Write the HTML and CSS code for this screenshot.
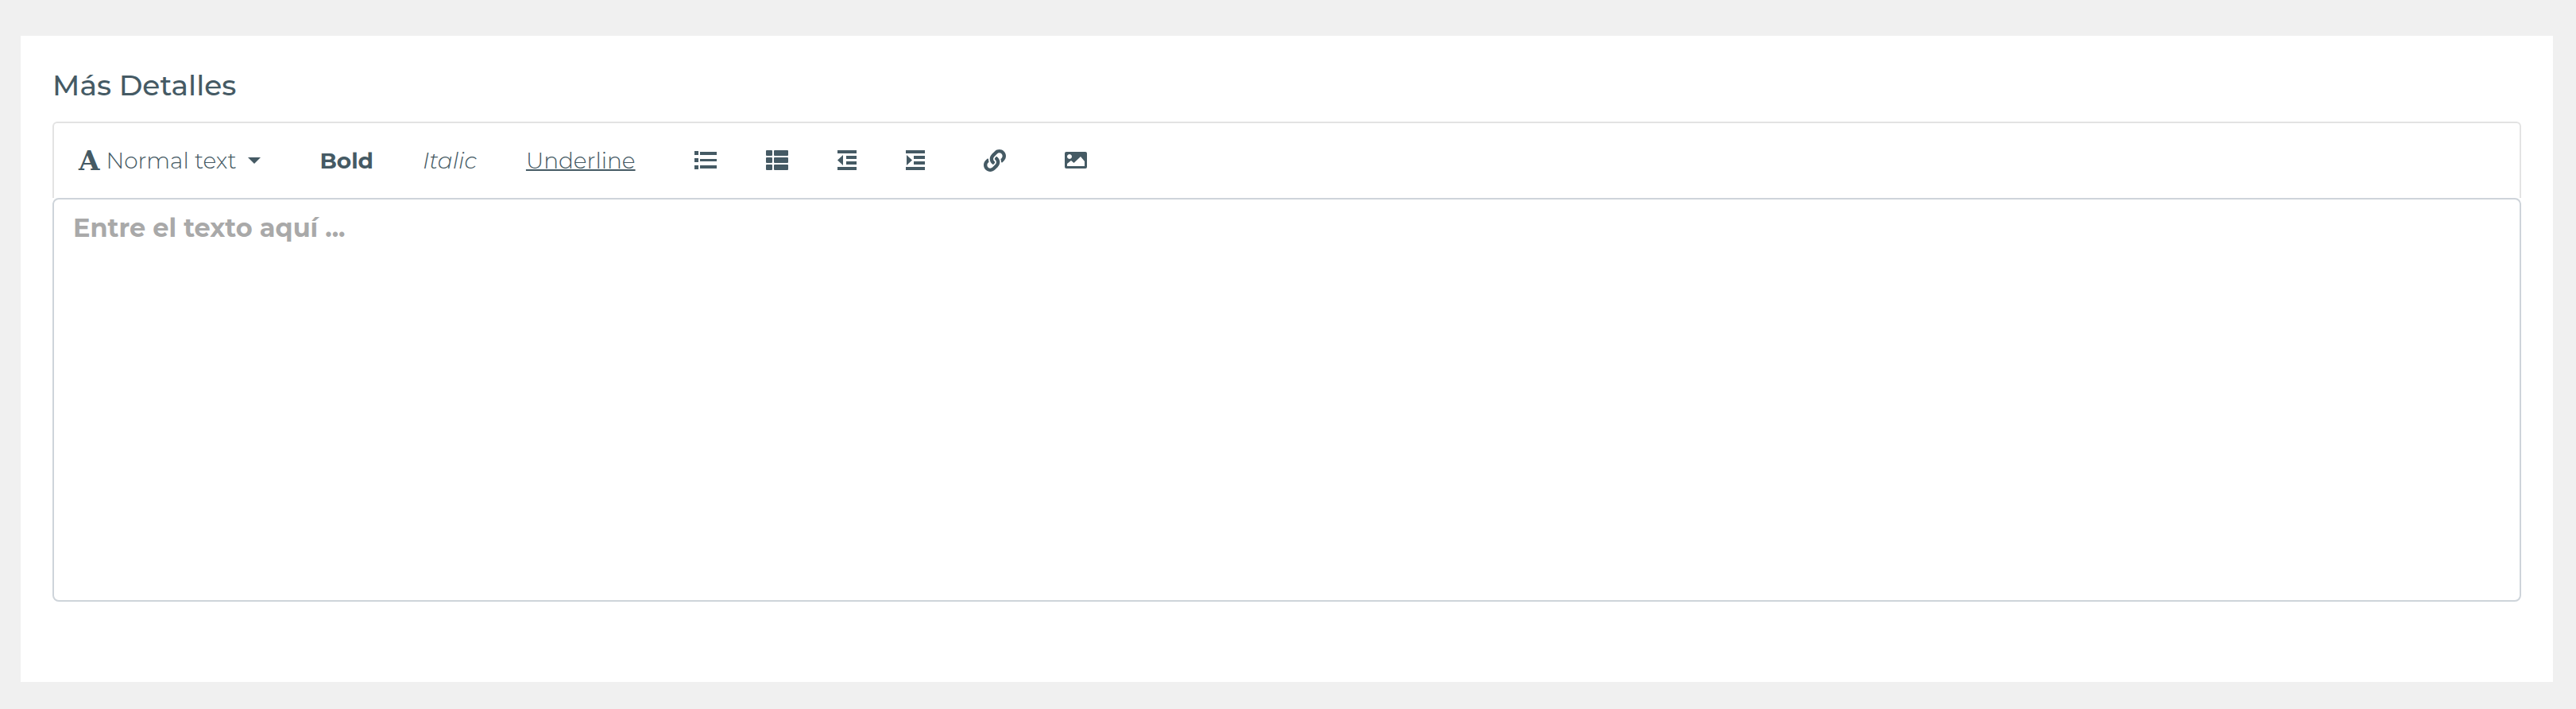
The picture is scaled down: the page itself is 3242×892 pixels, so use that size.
FILE: index.html
```html
<!DOCTYPE html>
<html lang="es">
<head>
    <meta charset="utf-8">
    <title>Más Detalles</title>
    <link rel="stylesheet" href="styles.css">
</head>
<body>
    <form class="card">
        <label class="card-title" for="details">Más Detalles</label>

        <!-- Toolbar -->
        <div class="toolbar">
            <label class="style-picker">
                <span class="font-icon">A</span>
                <select class="style-select" aria-label="Text style">
                    <option>Normal text</option>
                    <option>Heading 1</option>
                    <option>Heading 2</option>
                </select>
                <span class="caret"></span>
            </label>

            <div class="group">
                <button type="button" class="tool bold">Bold</button>
                <button type="button" class="tool italic">Italic</button>
                <button type="button" class="tool underline">Underline</button>
            </div>

            <div class="group">
                <button type="button" class="tool" aria-label="Unordered list">
                    <svg width="28" height="28" viewBox="0 1 28 28">
                        <path d="M0 3h5v5H0zM7 4h21v4H7zM0 12h5v5H0zM7 13h21v3H7zM0 21h5v5H0zM7 21h21v4H7z"/>
                    </svg>
                </button>
                <button type="button" class="tool" aria-label="Ordered list">
                    <svg width="28" height="28" viewBox="0 1 28 28">
                        <path d="M1 2h6q1 0 1 1v5q0 1-1 1H1q-1 0-1-1V3q0-1 1-1zM11 2h16q1 0 1 1v5q0 1-1 1H11q-1 0-1-1V3q0-1 1-1zM1 11h6q1 0 1 1v5q0 1-1 1H1q-1 0-1-1v-5q0-1 1-1zM11 11h16q1 0 1 1v5q0 1-1 1H11q-1 0-1-1v-5q0-1 1-1zM1 20h6q1 0 1 1v5q0 1-1 1H1q-1 0-1-1v-5q0-1 1-1zM11 20h16q1 0 1 1v5q0 1-1 1H11q-1 0-1-1v-5q0-1 1-1z"/>
                    </svg>
                </button>
                <button type="button" class="tool" aria-label="Outdent">
                    <svg width="24" height="28" viewBox="0 1 24 28">
                        <path d="M0 2h24v4H0zM11 9h13v4H11zM11 16h13v4H11zM0 23h24v4H0zM7 8v13L0 14.500z"/>
                    </svg>
                </button>
                <button type="button" class="tool" aria-label="Indent">
                    <svg width="24" height="28" viewBox="0 1 24 28">
                        <path d="M0 2h24v4H0zM10 9h14v4H10zM10 16h14v4H10zM0 23h24v4H0zM1 8v13l7-6.500z"/>
                    </svg>
                </button>
            </div>

            <button type="button" class="tool" aria-label="Link">
                <svg width="28" height="28" viewBox="0 0 512 512">
                    <path d="M326.612 185.391c59.747 59.809 58.927 155.698.36 214.59-.11.12-.24.25-.36.37l-67.2 67.2c-59.27 59.27-155.699 59.262-214.96 0-59.27-59.26-59.27-155.7 0-214.96l37.106-37.106c9.84-9.84 26.786-3.3 27.294 10.606.648 17.722 3.826 35.527 9.69 52.721 1.986 5.822.567 12.262-3.783 16.612l-13.087 13.087c-28.026 28.026-28.905 73.66-1.155 101.96 28.024 28.579 74.086 28.749 102.325.51l67.2-67.19c28.191-28.191 28.073-73.757 0-101.83-3.701-3.694-7.429-6.564-10.341-8.569a16.037 16.037 0 0 1-6.947-12.606c-.396-10.567 3.348-21.456 11.698-29.806l21.054-21.055c5.521-5.521 14.182-6.199 20.584-1.731a152.482 152.482 0 0 1 20.522 17.197zM467.547 44.449c-59.261-59.262-155.69-59.27-214.96 0l-67.2 67.2c-.12.12-.25.25-.36.37-58.566 58.892-59.387 154.781.36 214.59a152.454 152.454 0 0 0 20.521 17.196c6.402 4.468 15.064 3.789 20.584-1.731l21.054-21.055c8.35-8.35 12.094-19.239 11.698-29.806a16.037 16.037 0 0 0-6.947-12.606c-2.912-2.005-6.64-4.875-10.341-8.569-28.073-28.073-28.191-73.639 0-101.83l67.2-67.19c28.239-28.239 74.3-28.069 102.325.51 27.75 28.3 26.872 73.934-1.155 101.96l-13.087 13.087c-4.35 4.35-5.769 10.79-3.783 16.612 5.864 17.194 9.042 34.999 9.69 52.721.509 13.906 17.454 20.446 27.294 10.606l37.106-37.106c59.271-59.259 59.271-155.699.001-214.959z"/>
                </svg>
            </button>
            <button type="button" class="tool" aria-label="Image">
                <svg width="28" height="28" viewBox="0 1 28 28">
                    <path fill-rule="evenodd" d="M2 4h24q2 0 2 2v17q0 2-2 2H2q-2 0-2-2V6q0-2 2-2zM6 7a3 3 0 1 0 .01 0zM3 22h22v-6l-5-6-8.500 8L8 15l-5 4z"/>
                </svg>
            </button>
        </div>

        <!-- Editor -->
        <textarea class="editor" id="details" rows="10" placeholder="Entre el texto aquí ..."></textarea>
    </form>
</body>
</html>
```
FILE: styles.css
```css
body {
    margin: 0;
    padding: 45px 29px 34px 26px;
    background-color: #f0f0f0;
    color: #455a64;
    font-family: Montserrat, Inter, "Open Sans", sans-serif;
}

.card {
    padding: 40px 40px 101px;
    background-color: #fff;
}

.card-title {
    display: block;
    margin-bottom: 24px;
    font-size: 36px;
    font-weight: 500;
    line-height: 44px;
}

/* Toolbar */
.toolbar {
    display: flex;
    align-items: center;
    gap: 12px;
    height: 94px;
    border: 2px solid #e3e3e3;
    border-bottom: none;
    border-radius: 6px 6px 0 0;
}

.group {
    display: flex;
}

.tool {
    display: flex;
    align-items: center;
    padding: 0 31px;
    border: none;
    background: none;
    color: inherit;
    font-family: inherit;
    font-size: 28px;
    font-weight: 300;
    line-height: 40px;
    cursor: pointer;
}

.tool svg {
    display: block;
    fill: currentColor;
}

.bold {
    font-weight: 700;
}

.italic {
    font-style: italic;
}

.underline {
    text-decoration: underline;
    text-decoration-thickness: 2px;
}

/* Text style drop-down */
.style-picker {
    display: flex;
    align-items: center;
    padding: 0 31px;
}

.font-icon {
    margin-right: 8px;
    font-family: "Roboto Slab", "DejaVu Serif", serif;
    font-size: 34px;
    font-weight: 700;
    line-height: 40px;
}

.style-select {
    appearance: none;
    margin: 0;
    padding: 0;
    border: none;
    background: none;
    color: inherit;
    font-family: inherit;
    font-size: 28px;
    font-weight: 300;
    line-height: 40px;
}

.caret {
    margin-left: 14px;
    border-top: 8px solid;
    border-right: 8px solid transparent;
    border-left: 8px solid transparent;
}

/* Editor */
.editor {
    display: block;
    box-sizing: border-box;
    width: 100%;
    padding: 12px 24px;
    border: 2px solid #ced4da;
    border-radius: 8px;
    background-color: #fff;
    color: inherit;
    font-family: inherit;
    font-size: 32px;
    line-height: 48px;
    resize: none;
}

.editor::placeholder {
    color: #a9a9a9;
    font-weight: 700;
    opacity: 1;
}
```
